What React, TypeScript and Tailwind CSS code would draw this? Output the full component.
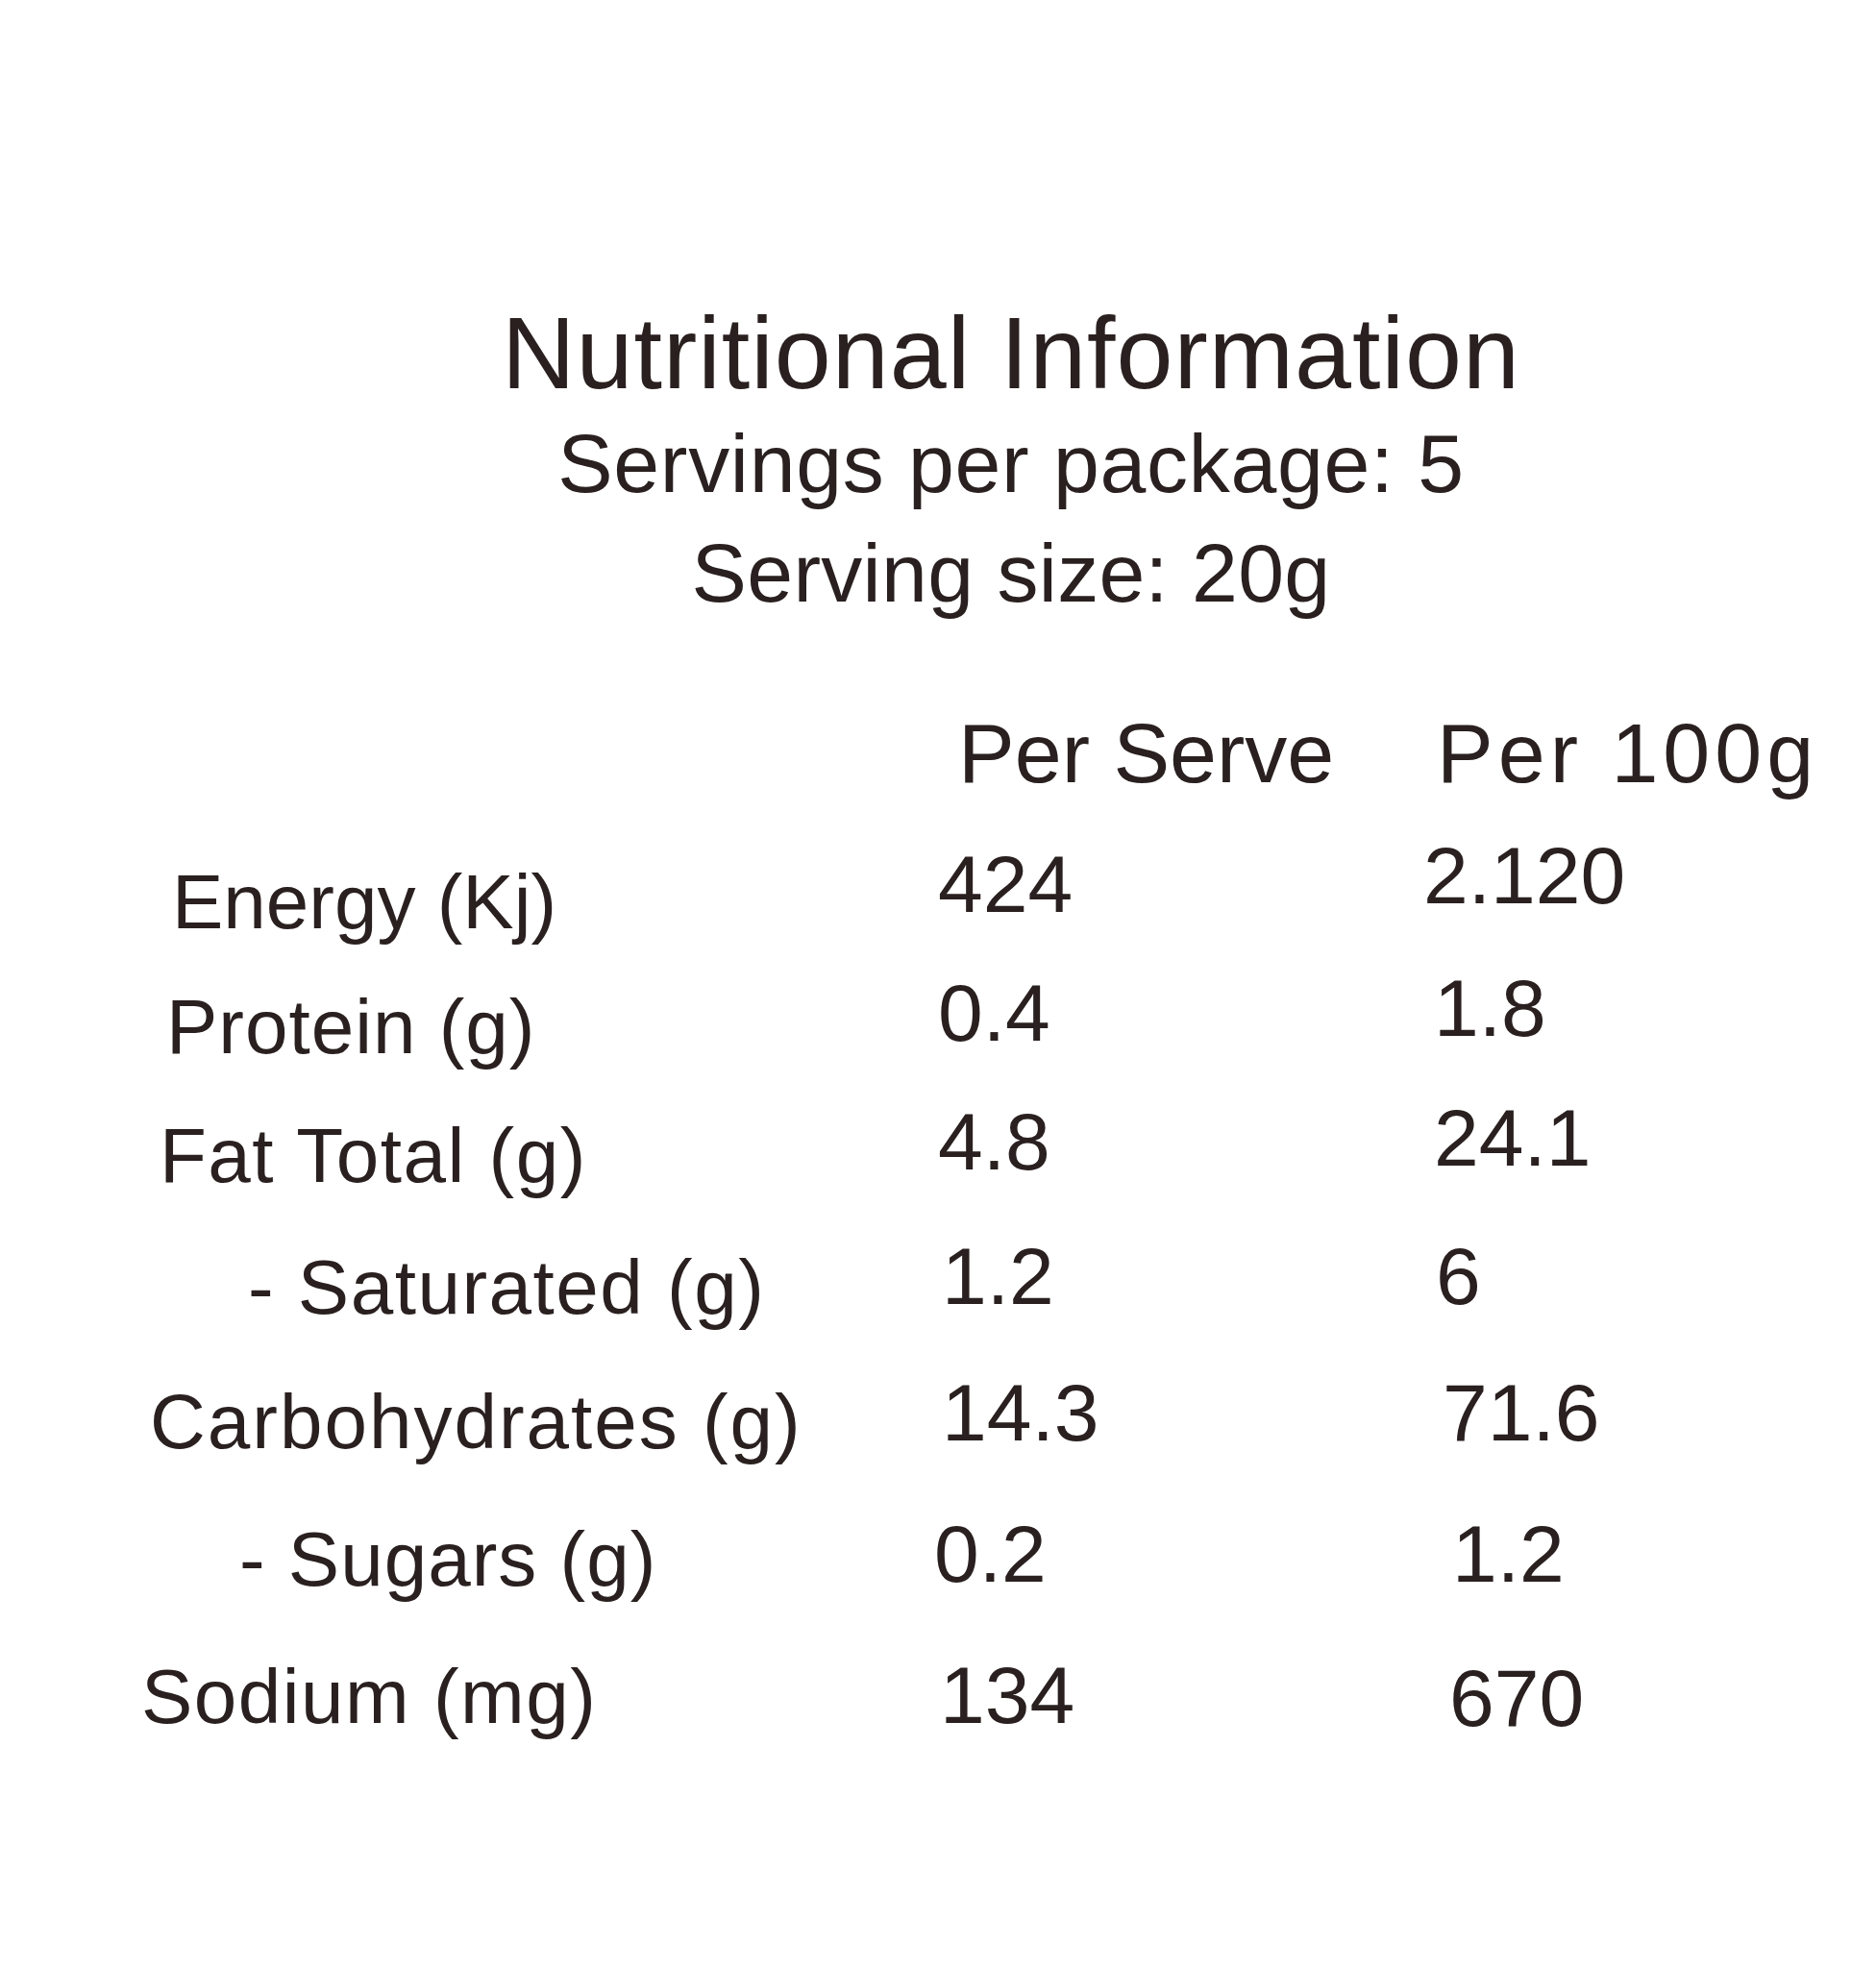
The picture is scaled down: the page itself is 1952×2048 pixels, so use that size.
import React from "react";

type Row = {
  label: string;
  serve: string;
  per100: string;
  row: string;
  lab: string;
  sv: string;
  pv: string;
};

const rows: Row[] = [
  { label: "Energy (Kj)", serve: "424", per100: "2.120", row: "h-[130px]", lab: "pl-[179px] tracking-[0px]", sv: "leading-[93px] pl-[4px]", pv: "leading-[75px] pl-[0px]" },
  { label: "Protein (g)", serve: "0.4", per100: "1.8", row: "h-[134px]", lab: "pl-[173px] tracking-[1px]", sv: "leading-[101px] pl-[4px]", pv: "leading-[91px] pl-[11px]" },
  { label: "Fat Total (g)", serve: "4.8", per100: "24.1", row: "h-[137px]", lab: "pl-[166px] tracking-[1.5px]", sv: "leading-[101px] pl-[4px]", pv: "leading-[93px] pl-[11px]" },
  { label: "- Saturated (g)", serve: "1.2", per100: "6", row: "h-[140px]", lab: "pl-[258px] tracking-[1.5px]", sv: "leading-[107px] pl-[8px]", pv: "leading-[107px] pl-[13px]" },
  { label: "Carbohydrates (g)", serve: "14.3", per100: "71.6", row: "h-[143px]", lab: "pl-[156px] tracking-[2px]", sv: "leading-[111px] pl-[8px]", pv: "leading-[111px] pl-[20px]" },
  { label: "- Sugars (g)", serve: "0.2", per100: "1.2", row: "h-[143px]", lab: "pl-[249px] tracking-[1px]", sv: "leading-[119px] pl-[0px]", pv: "leading-[119px] pl-[30px]" },
  { label: "Sodium (mg)", serve: "134", per100: "670", row: "h-[143px]", lab: "pl-[147px] tracking-[1.5px]", sv: "leading-[127px] pl-[6px]", pv: "leading-[133px] pl-[27px]" },
];

export default function App() {
  return (
    <div
      className="w-[1952px] h-[2048px] bg-white text-[#2a2020] overflow-hidden"
      style={{ fontFamily: '"Liberation Sans", Arial, sans-serif' }}
    >
      <div className="pt-[311px] pl-[152px] text-center">
        <div className="text-[106px] leading-[112px] tracking-[1px]">Nutritional Information</div>
        <div className="mt-[2px] text-[86px] leading-[114px] tracking-[0.7px]">
          Servings per package: 5
        </div>
        <div className="text-[86px] leading-[114px] tracking-[0.3px]">Serving size: 20g</div>
      </div>

      <div className="mt-[81px]">
        <div className="grid grid-cols-[972px_518px_1fr] items-baseline text-[88px] leading-[100px]">
          <div />
          <div className="pl-[25px] whitespace-nowrap">Per Serve</div>
          <div className="pl-[5px] whitespace-nowrap tracking-[5px]">Per 100g</div>
        </div>
        <div className="mt-[40px] flex flex-col">
          {rows.map((r) => (
            <div key={r.label} className={`grid grid-cols-[972px_509px_1fr] items-start ${r.row}`}>
              <div className={`text-[80px] leading-[130px] whitespace-nowrap ${r.lab}`}>{r.label}</div>
              <div className={`text-[84px] whitespace-nowrap ${r.sv}`}>{r.serve}</div>
              <div className={`text-[84px] whitespace-nowrap ${r.pv}`}>{r.per100}</div>
            </div>
          ))}
        </div>
      </div>
    </div>
  );
}
